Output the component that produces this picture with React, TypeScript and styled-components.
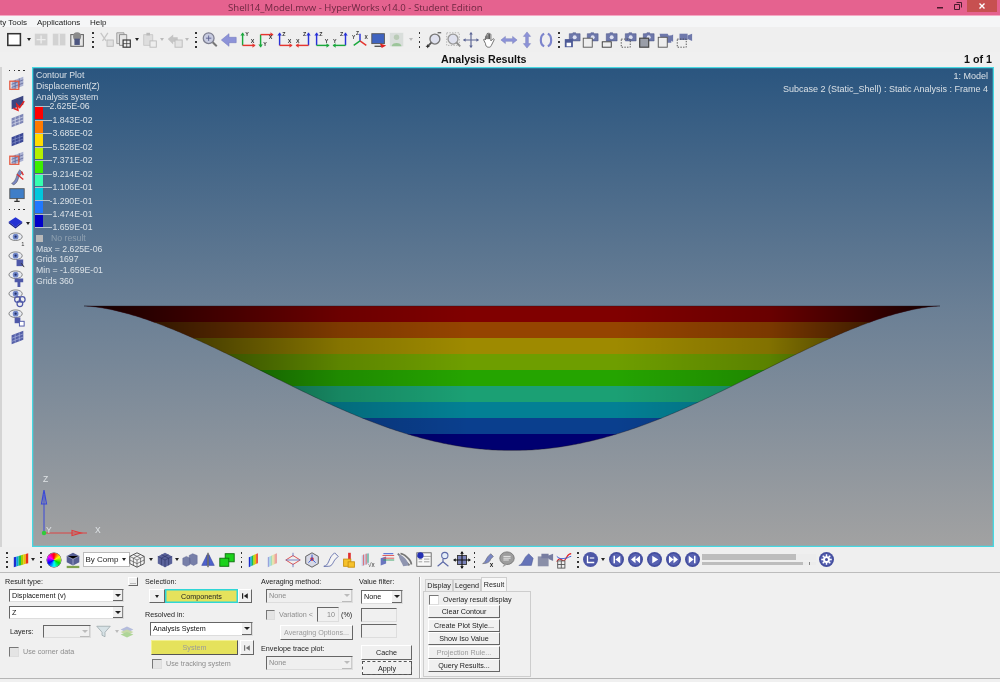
import React from 'react';
import styled, { createGlobalStyle } from 'styled-components';

const GlobalStyle = createGlobalStyle`
  html, body { margin: 0; padding: 0; background: #f0f0f0; }
  * { box-sizing: border-box; }
  #root { width: 1000px; height: 682px; overflow: hidden; }
`;

const Root = styled.div`
  width: 1000px;
  height: 682px;
  display: flex;
  flex-direction: column;
  overflow: hidden;
  background: #f0f0f0;
  color: #222;
  font-family: "Liberation Sans", Arial, sans-serif;
  filter: blur(0.3px);
`;

const TitleBar = styled.div`
  height: 16px;
  flex: none;
  display: flex;
  background: #e5628f;
  border-bottom: 1px solid #f4a9c3;
  padding-left: 228px;
`;

const TitleText = styled.div`
  font-family: "Open Sans", sans-serif;
  font-size: 9.6px;
  line-height: 15px;
  color: #6d2740;
  flex: 1;
`;

const WindowButton = styled.div<{ $close?: boolean }>`
  width: ${p => (p.$close ? '30px' : '18px')};
  height: 12px;
  display: flex;
  align-items: center;
  justify-content: center;
  background: ${p => (p.$close ? '#c75050' : 'transparent')};
  margin-right: ${p => (p.$close ? '3px' : '0')};
`;

const MenuBar = styled.div`
  height: 11px;
  flex: none;
  display: flex;
  background: #f5f6f7;
  font-size: 8px;
  line-height: 13px;
  color: #222;
`;

const MenuItem = styled.span<{ $w: number }>`
  width: ${p => p.$w}px;
  flex: none;
`;

const Toolbar = styled.div`
  height: 25px;
  flex: none;
  display: flex;
  align-items: center;
  padding-left: 6px;
  background: #efefef;
`;

const Cell = styled.div<{ $w?: number; $h?: number }>`
  width: ${p => p.$w ?? 18.7}px;
  height: ${p => p.$h ?? 20}px;
  flex: none;
  display: flex;
  align-items: center;
  justify-content: center;
`;

const Glyph = styled.svg<{ $size?: number }>`
  width: ${p => p.$size ?? 18}px;
  height: ${p => p.$size ?? 18}px;
  flex: none;
  overflow: visible;
`;

const Caret = styled.i<{ $dim?: boolean }>`
  width: 0;
  height: 0;
  display: block;
  border-left: 2.5px solid transparent;
  border-right: 2.5px solid transparent;
  border-top: 3px solid ${p => (p.$dim ? '#bbb' : '#222')};
`;

const Dots = styled.i`
  width: 1.5px;
  height: 16px;
  display: block;
  background: repeating-linear-gradient(#333 0 1.5px, transparent 1.5px 4.7px);
`;

const Heading = styled.div`
  height: 15px;
  flex: none;
  display: flex;
  justify-content: space-between;
  align-items: center;
  padding: 0 8px 1px 441px;
  font-size: 10.7px;
  font-weight: bold;
  color: #111;
`;

const Middle = styled.div`
  height: 480px;
  flex: none;
  display: flex;
  padding-right: 6px;
`;

const SideBar = styled.div`
  width: 32px;
  flex: none;
  display: flex;
  flex-direction: column;
  align-items: center;
  border-left: 2px solid #d4d4d4;
`;

const SideCell = styled.div<{ $h?: number }>`
  height: ${p => p.$h ?? 18.7}px;
  flex: none;
  display: flex;
  align-items: center;
  justify-content: center;
  position: relative;
`;

const SideDots = styled.i`
  width: 16px;
  height: 1.5px;
  display: block;
  background: repeating-linear-gradient(90deg, #333 0 1.5px, transparent 1.5px 4.7px);
`;

const CaretAside = styled.span`
  position: absolute;
  left: 18px;
  top: 50%;
  margin-top: -1px;
`;

const Diamond = styled(Glyph)`
  margin-right: 4px;
`;

const Viewport = styled.div`
  position: relative;
  width: 962px;
  flex: none;
  overflow: hidden;
  background: linear-gradient(#2a557f 0%, #6a7f95 50%, #a2a2a2 100%);
  box-shadow: inset 0 0 0 1.3px #46d8e2;
  color: #d9e0e6;
  font-size: 8.7px;
  line-height: 10.8px;
`;

const Scene = styled.svg`
  position: absolute;
  inset: 0;
  width: 100%;
  height: 100%;
`;

const Legend = styled.div`
  position: absolute;
  left: 4px;
  top: 3px;
`;

const LegendScale = styled.div`
  position: relative;
  height: 121px;
  width: 60px;
  margin-top: 4px;
  margin-bottom: 5.5px;
`;

const Swatch = styled.div<{ $c: string; $y: number }>`
  position: absolute;
  left: -1px;
  width: 8px;
  height: 12.4px;
  top: ${p => p.$y + 0.3}px;
  background: ${p => p.$c};
`;

const Tick = styled.div<{ $y: number }>`
  position: absolute;
  left: -1px;
  top: ${p => p.$y - 5}px;
  height: 11px;
  display: flex;
  align-items: center;
  white-space: nowrap;
  &::before {
    content: '';
    width: 14.5px;
    height: 1px;
    background: #b4c2cc;
    flex: none;
  }
`;

const NoResult = styled.div`
  display: flex;
  align-items: center;
  gap: 8px;
  color: #8ea0b0;
  &::before {
    content: '';
    width: 7px;
    height: 7px;
    background: #b9b9b9;
  }
`;

const ModelLabel = styled.div`
  position: absolute;
  right: 6px;
  top: 3px;
  text-align: right;
  line-height: 13px;
  font-size: 9px;
`;

const AnimBar = styled(Toolbar)`
  padding-left: 0;
`;

const TypeSelect = styled.div`
  width: 47px;
  height: 15px;
  display: flex;
  align-items: center;
  justify-content: space-between;
  background: #fff;
  border: 1px solid #bbb;
  padding: 0 3px 0 2px;
  font-size: 8px;
`;

const Wheel = styled.div`
  width: 14px;
  height: 14px;
  border-radius: 50%;
  background: conic-gradient(#f00, #ff0, #0d0, #0ff, #00f, #f0f, #f00);
  box-shadow: 0 0 0 .5px #333;
`;

const Slider = styled.div`
  width: 114px;
  flex: none;
  display: flex;
  flex-direction: column;
  gap: 2px;
`;

const SliderTrack = styled.div<{ $thin?: boolean }>`
  height: ${p => (p.$thin ? 3 : 6)}px;
  background: #bdbdbd;
  display: flex;
  justify-content: flex-end;
  &::after {
    content: '';
    width: ${p => (p.$thin ? 13 : 20)}px;
    background: linear-gradient(90deg, #ececec 0 48%, #888 48% 52%, #ececec 52%);
  }
`;

const Panel = styled.div`
  height: 110px;
  flex: none;
  display: flex;
  padding: 4px 0 0 5px;
  border-top: 1px solid #bcbcbc;
  position: relative;
  font-size: 7.2px;
  line-height: 9px;
  color: #222;
  &::after {
    content: '';
    position: absolute;
    left: 0;
    right: 0;
    top: 105px;
    border-top: 1px solid #b5b5b5;
  }
`;

const Column = styled.div<{ $w: number; $after?: number }>`
  width: ${p => p.$w}px;
  margin-right: ${p => p.$after ?? 6}px;
  flex: none;
  display: flex;
  flex-direction: column;
`;

const Label = styled.div<{ $top?: number; $w?: number }>`
  height: 9px;
  flex: none;
  width: ${p => (p.$w ? `${p.$w}px` : 'auto')};
  margin-top: ${p => p.$top ?? 0}px;
  white-space: nowrap;
`;

const LabelRow = styled.div`
  display: flex;
  justify-content: space-between;
`;

const Row = styled.div<{ $top?: number; $left?: number; $gap?: number }>`
  display: flex;
  align-items: center;
  margin-top: ${p => p.$top ?? 0}px;
  margin-left: ${p => p.$left ?? 0}px;
  gap: ${p => p.$gap ?? 0}px;
`;

const Combo = styled.div<{ $w: number; $h?: number; $off?: boolean; $top?: number; $left?: number }>`
  width: ${p => p.$w}px;
  height: ${p => p.$h ?? 13}px;
  flex: none;
  margin-top: ${p => p.$top ?? 0}px;
  margin-left: ${p => p.$left ?? 0}px;
  display: flex;
  align-items: stretch;
  padding-left: 2px;
  line-height: ${p => (p.$h ?? 13) - 2}px;
  background: ${p => (p.$off ? '#efefef' : '#fff')};
  color: ${p => (p.$off ? '#8b8b8b' : '#111')};
  border: 1px solid;
  border-color: #666 #ddd #ddd #666;
`;

const ComboArrow = styled.span<{ $off?: boolean }>`
  width: 10px;
  margin-left: auto;
  display: flex;
  align-items: center;
  justify-content: center;
  background: #f0f0f0;
  border-bottom: 1px solid ${p => (p.$off ? '#bbb' : '#666')};
  border-right: 1px solid ${p => (p.$off ? '#ccc' : '#888')};
  & > i {
    border-left-width: 3px;
    border-right-width: 3px;
    border-top-width: 3.5px;
  }
`;

const Check = styled.div<{ $off?: boolean; $w?: number }>`
  display: flex;
  align-items: center;
  gap: 4px;
  height: 9px;
  flex: none;
  width: ${p => (p.$w ? `${p.$w}px` : 'auto')};
  white-space: nowrap;
  color: ${p => (p.$off ? '#8d8d8d' : '#222')};
  &::before {
    content: '';
    width: 8px;
    height: 8px;
    background: ${p => (p.$off ? '#e4e4e4' : '#fff')};
    border: 1px solid;
    border-color: #777 #ddd #ddd #777;
  }
`;

const Raised = styled.button<{ $w: number; $h?: number; $off?: boolean; $top?: number; $left?: number; $focus?: boolean }>`
  width: ${p => p.$w}px;
  height: ${p => p.$h ?? 13}px;
  flex: none;
  margin: ${p => p.$top ?? 0}px 0 0 ${p => p.$left ?? 0}px;
  padding: 0;
  font: inherit;
  white-space: nowrap;
  overflow: hidden;
  background: #f0f0f0;
  color: ${p => (p.$off ? '#9a9a9a' : '#222')};
  border: 1px solid;
  border-color: #fff #666 #666 #fff;
  outline: ${p => (p.$focus ? '1px dashed #555' : 'none')};
  outline-offset: -1px;
  display: flex;
  align-items: center;
  justify-content: center;
`;

const Yellow = styled(Raised)<{ $cyan?: boolean }>`
  background: #e5e25c;
  border-color: ${p => (p.$cyan ? '#2fd6d6' : '#f2f08f #555 #555 #f2f08f')};
  box-shadow: ${p => (p.$cyan ? 'inset 0 0 0 .5px #2fd6d6' : 'none')};
`;

const TextBox = styled.div<{ $w: number; $h?: number; $top?: number }>`
  width: ${p => p.$w}px;
  height: ${p => p.$h ?? 14}px;
  flex: none;
  margin: ${p => p.$top ?? 0}px 0 0 2px;
  padding-right: 3px;
  line-height: 13px;
  text-align: right;
  color: #888;
  border: 1px solid;
  border-color: #666 #ddd #ddd #666;
`;

const Divider = styled.div`
  width: 2px;
  height: 101px;
  flex: none;
  margin: 0 2px 0 0;
  background: linear-gradient(90deg, #aaa 50%, #fff 50%);
`;

const TabRow = styled.div`
  height: 14px;
  padding-left: 2px;
  display: flex;
  align-items: flex-end;
`;

const Tab = styled.div<{ $w: number; $active?: boolean }>`
  width: ${p => p.$w}px;
  height: ${p => (p.$active ? 14 : 12)}px;
  text-align: center;
  line-height: ${p => (p.$active ? 13 : 12)}px;
  background: ${p => (p.$active ? '#f7f7f7' : '#ececec')};
  border: 1px solid #cfcfcf;
  border-bottom: none;
  color: #222;
`;

const TabBody = styled.div`
  height: 86px;
  width: 108px;
  border: 1px solid #cdcdcd;
  padding: 3px 0 0 4px;
  display: flex;
  flex-direction: column;
`;

const Triad = styled.svg`
  position: absolute;
  left: 0;
  bottom: 0;
  width: 80px;
  height: 80px;
`;

// small drawn icons ---------------------------------------------------------

const G = ({ size, children }: { size?: number; children: React.ReactNode }) => (
  <Glyph $size={size} viewBox="0 0 20 20">{children}</Glyph>
);

const Axes = ({ vc, hc, vl, hl, fx, fy }: { vc: string; hc: string; vl: string; hl: string; fx?: boolean; fy?: boolean }) => {
  const x = fx ? 15 : 4;
  const y = fy ? 4 : 16;
  const endY = fy ? 18 : 2;
  const endX = fx ? 1 : 18;
  return (
    <G>
      <path d={`M${x} ${y}V${endY}`} stroke={vc} strokeWidth="1.6" />
      <path d={`M${x - 2.5} ${endY + (fy ? -3 : 3)}L${x} ${endY}L${x + 2.5} ${endY + (fy ? -3 : 3)}Z`} fill={vc} />
      <path d={`M${x} ${y}H${endX}`} stroke={hc} strokeWidth="1.6" />
      <path d={`M${endX + (fx ? 3 : -3)} ${y - 2.5}L${endX} ${y}L${endX + (fx ? 3 : -3)} ${y + 2.5}Z`} fill={hc} />
      <text x={fx ? 9 : 7} y={fy ? 17 : 5} fontSize="6" fontWeight="bold" fill="#333">{vl}</text>
      <text x={fx ? 1 : 13} y={fy ? 9 : 13} fontSize="6" fontWeight="bold" fill="#333">{hl}</text>
    </G>
  );
};

const Camera = ({ mark }: { mark: React.ReactNode }) => (
  <G>
    <path d="M7 3h3l1-1h3l1 1h4v8H7z" fill="#6e78ab" stroke="#4c5588" strokeWidth=".6" />
    <circle cx="13" cy="7" r="2.2" fill="#dfe2f2" />
    {mark}
  </G>
);

const Media = ({ children }: { children: React.ReactNode }) => (
  <Glyph $size={15} viewBox="0 0 20 20">
    <circle cx="10" cy="10" r="10" fill="#454f9f" />
    <circle cx="10" cy="10" r="7.6" fill="#5862b2" />
    <g fill="#fff">{children}</g>
  </Glyph>
);

const Sheet = ({ fill, line, frame }: { fill: string; line: string; frame?: boolean }) => (
  <G>
    <path d="M4 8l13-5v10L4 18z" fill={fill} />
    <path d="M8 6.5v10M12.5 4.8v10M4 11.5l13-5M4 15l13-5" stroke={line} strokeWidth=".7" />
    {frame && <rect x="2" y="8" width="10" height="9" fill="none" stroke="#e4573f" strokeWidth="1.4" />}
  </G>
);

const Eye = ({ children }: { children?: React.ReactNode }) => (
  <G size={19}>
    <ellipse cx="8" cy="6" rx="7" ry="4" fill="#e8ebf2" stroke="#666" strokeWidth=".8" />
    <circle cx="8" cy="6" r="3" fill="#6f86c9" />
    <circle cx="8" cy="6" r="1.2" fill="#243066" />
    {children}
  </G>
);

const Rainbow = ({ stops, w = 16 }: { stops: string[]; w?: number }) => (
  <G>
    {stops.map((c, i) => {
      const bw = w / stops.length;
      const x = 2 + i * bw;
      const t = 7 - (i * 4.5) / stops.length;
      return <path key={c + i} d={`M${x} ${t}l${bw} -${4.5 / stops.length}v11l-${bw} ${4.5 / stops.length}z`} fill={c} />;
    })}
  </G>
);

const RAINBOW = ['#1d2fd0', '#0aa0e0', '#18c050', '#a0d000', '#f0c000', '#e8301a'];
const PALE = ['#9aa3dc', '#9fd4ec', '#a6e0b4', '#e6e2a0', '#eec5a0', '#e88e8e'];

const topGroups: { icon: React.ReactNode; w?: number }[] = [
  { w: 18, icon: <G><rect x="2" y="3" width="14" height="13" fill="#fff" stroke="#333" strokeWidth="1.7" /></G> },
  { w: 9, icon: <Caret /> },
  { w: 18, icon: <G><rect x="2" y="3" width="14" height="13" fill="#d2d2d2" /><path d="M9 5v9M4 9.5h10" stroke="#eee" strokeWidth="1.5" /></G> },
  { w: 18, icon: <G><rect x="2" y="3" width="14" height="13" fill="#d2d2d2" /><path d="M9 3v13" stroke="#eee" strokeWidth="1.5" /></G> },
  { w: 18, icon: <G><rect x="2" y="4" width="14" height="13" fill="#e6e6e6" stroke="#666" strokeWidth="1.2" /><circle cx="9" cy="6" r="4.5" fill="#8b8b8b" /><path d="M6 8.5h6v7H6z" fill="#4d5680" /></G> },
  { w: 12, icon: <Dots /> },
  { w: 16, icon: <G><path d="M3 2l6 9M11 2l-6 9" stroke="#c6c6c6" strokeWidth="1.4" /><rect x="10" y="10" width="7" height="7" fill="#e0e0e0" stroke="#bbb" /></G> },
  { w: 18, icon: <G><path d="M2 2h8v12H2z" fill="#ddd" stroke="#999" /><path d="M5 4h8v12H5z" fill="#e6e6e6" stroke="#888" /><rect x="9" y="10" width="8" height="8" fill="#eee" stroke="#333" strokeWidth="1.3" /><path d="M13 10v8M9 14h8" stroke="#333" strokeWidth=".8" /></G> },
  { w: 8, icon: <Caret /> },
  { w: 17, icon: <G><path d="M3 4h10v12H3z" fill="#dedede" stroke="#c8c8c8" /><rect x="6" y="2" width="4" height="3" fill="#bbb" /><rect x="10" y="11" width="7" height="7" fill="#eee" stroke="#bbb" /></G> },
  { w: 8, icon: <Caret $dim /> },
  { w: 17, icon: <G><path d="M2 9l6-5v3h5v5H8v3z" fill="#c4c4c4" /><rect x="10" y="10" width="8" height="8" fill="#e4e4e4" stroke="#bbb" /></G> },
  { w: 8, icon: <Caret $dim /> },
  { w: 10, icon: <Dots /> },
  { icon: <G><circle cx="8.5" cy="8" r="6" fill="#c7cbe0" stroke="#7d7f90" strokeWidth="1.4" /><path d="M8.5 5v6M5.5 8h6" stroke="#5a6090" /><path d="M13 12.5l4.5 4.5" stroke="#777" strokeWidth="2.2" /></G> },
  { icon: <G><path d="M1.5 10L10 3v4h8v6h-8v4z" fill="#8d93d8" stroke="#7177bd" strokeWidth=".6" /></G> },
  { icon: <Axes vc="#1aa83c" hc="#e5352f" vl="Y" hl="X" /> },
  { icon: <Axes vc="#1aa83c" hc="#e5352f" vl="Y" hl="X" fy /> },
  { icon: <Axes vc="#2731d8" hc="#e5352f" vl="Z" hl="X" /> },
  { icon: <Axes vc="#2731d8" hc="#e5352f" vl="Z" hl="X" fx /> },
  { icon: <Axes vc="#2731d8" hc="#1aa83c" vl="Z" hl="Y" /> },
  { icon: <Axes vc="#2731d8" hc="#1aa83c" vl="Z" hl="Y" fx /> },
  { icon: <G><path d="M10 11V3" stroke="#2731d8" strokeWidth="1.6" /><path d="M10 11l7 5" stroke="#e5352f" strokeWidth="1.6" /><path d="M10 11l-7 5" stroke="#1aa83c" strokeWidth="1.6" /><text x="1" y="9" fontSize="5.5" fill="#333" fontWeight="bold">Y</text><text x="15" y="9" fontSize="5.5" fill="#333" fontWeight="bold">X</text><text x="5.5" y="4" fontSize="5.5" fill="#333" fontWeight="bold">Z</text></G> },
  { icon: <G><rect x="2" y="3" width="14" height="11" fill="#3f63c0" stroke="#555" /><path d="M5 17h8" stroke="#555" strokeWidth="1.5" /><path d="M11 14l7 2-5 3z" fill="#e02222" /></G> },
  { icon: <G><rect x="2" y="2" width="15" height="15" fill="#d9dedb" /><circle cx="9.5" cy="7" r="3" fill="#b9cbb6" /><path d="M4 17c0-5 11-5 11 0z" fill="#9cc59a" /></G> },
  { w: 8, icon: <Caret $dim /> },
  { w: 10, icon: <Dots /> },
  { icon: <G><circle cx="11" cy="9" r="5.5" fill="#dfe1ee" stroke="#777" strokeWidth="1.5" /><path d="M7 13l-4 4" stroke="#555" strokeWidth="2" /><path d="M14 2h4M1 17h4M3 15v4" stroke="#222" /></G> },
  { icon: <G><circle cx="10" cy="9" r="5.5" fill="#dfe1ee" stroke="#999" strokeWidth="1.5" /><path d="M14 13l4 4" stroke="#888" strokeWidth="2" /><rect x="3" y="2" width="14" height="14" fill="none" stroke="#aaa" strokeDasharray="1.5 1.5" /></G> },
  { icon: <G><path d="M10 2v16M2 10h16" stroke="#5d6695" strokeWidth="1.3" /><path d="M10 1l2 3H8zM10 19l2-3H8zM1 10l3-2v4zM19 10l-3-2v4z" fill="#5d6695" /></G> },
  { icon: <G><path d="M5 10V6c0-1 1.5-1 1.5 0v3V3.500c0-1 1.5-1 1.5 0V9V3c0-1 1.5-1 1.5 0v6V4c0-1 1.500-1 1.500 0v7l2-2c1-1 2 0 1.500 1l-3 6c-.5 1-1 2-2 2H8c-2 0-3-2-3-4l-2-4c-.5-1 1-1.500 2 0z" fill="#fff" stroke="#555" strokeWidth=".9" /></G> },
  { icon: <G><path d="M1 10l5-4v2.500h8V6l5 4-5 4v-2.500H6V14z" fill="#8d93d8" stroke="#6f76b8" strokeWidth=".5" /></G> },
  { icon: <G><path d="M10 1l4 5h-2.500v8H14l-4 5-4-5h2.500V6H6z" fill="#8d93d8" stroke="#6f76b8" strokeWidth=".5" /></G> },
  { icon: <G><path d="M8 3C3 5 3 15 8 17M12 3c5 2 5 12 0 14" fill="none" stroke="#7c84cc" strokeWidth="2.4" /></G> },
  { w: 7, icon: <Dots /> },
  { icon: <Camera mark={<><rect x="2" y="9" width="9" height="9" fill="#4d5a97" /><rect x="4" y="13" width="5" height="4" fill="#fff" /></>} /> },
  { icon: <Camera mark={<rect x="2.5" y="8" width="10" height="10" fill="#eee" stroke="#555" />} /> },
  { icon: <Camera mark={<rect x="2.5" y="12" width="10" height="6" fill="#eee" stroke="#333" />} /> },
  { icon: <Camera mark={<rect x="2.5" y="9" width="10" height="9" fill="none" stroke="#444" strokeDasharray="1.5 1.5" />} /> },
  { icon: <Camera mark={<rect x="3" y="8" width="10" height="10" fill="#9a9ea8" stroke="#444" strokeWidth="1.3" />} /> },
  { icon: <G><path d="M4 3h9l1 2h3v8H6z" fill="#6e78ab" /><path d="M13 7l6-3v8l-6-3z" fill="#6e78ab" /><rect x="2.5" y="7" width="10" height="11" fill="#eee" stroke="#555" /></G> },
  { icon: <G><path d="M5 3h9v7H5z" fill="#6e78ab" /><path d="M14 5l5-2v8l-5-2z" fill="#6e78ab" /><rect x="2.5" y="9" width="10" height="9" fill="none" stroke="#444" strokeDasharray="1.5 1.5" /></G> },
];

const sideTop: React.ReactNode[] = [
  <Sheet fill="#aab1d2" line="#4f5890" frame />,
  <G><path d="M4 8l13-5v10L4 18z" fill="#3b4582" /><path d="M18 9l-5 7-3-3 1 6-5-2" fill="none" stroke="#e02222" strokeWidth="1.8" /></G>,
  <Sheet fill="#7d85b5" line="#dfe2f0" />,
  <Sheet fill="#3a4795" line="#8d97cf" />,
  <Sheet fill="#aab1d2" line="#4f5890" frame />,
  <G><path d="M4 18c3-1 5-5 6-10l3-5 3 3-4 5c-1 4-2 7-6 9z" fill="#7a87c4" stroke="#444" strokeWidth=".5" /><path d="M10 8l7 6M15 5l2 4" stroke="#e03030" strokeWidth="1.5" /></G>,
  <G><rect x="2" y="3" width="16" height="11" fill="#3f7ec8" stroke="#555" /><path d="M7 17h6M10 14v3" stroke="#333" strokeWidth="1.5" /></G>,
];

const sideEyes: React.ReactNode[] = [
  <Eye><text x="14" y="16" fontSize="6" fill="#333">1</text></Eye>,
  <Eye><rect x="9" y="10" width="7" height="7" fill="#4e58a8" /><path d="M14 14l3 4" stroke="#333" /></Eye>,
  <Eye><path d="M7 10h9v4h-3v5h-3v-5H7z" fill="#4e58a8" /></Eye>,
  <Eye><circle cx="10" cy="12" r="3" fill="none" stroke="#4e58a8" strokeWidth="1.3" /><circle cx="15" cy="12" r="3" fill="none" stroke="#4e58a8" strokeWidth="1.3" /><circle cx="12.5" cy="16.5" r="3" fill="none" stroke="#4e58a8" strokeWidth="1.3" /></Eye>,
  <Eye><rect x="7" y="10" width="6" height="6" fill="#4e58a8" /><rect x="12" y="14" width="5" height="5" fill="#fff" stroke="#4e58a8" /></Eye>,
  <Sheet fill="#5560a8" line="#aeb6e0" />,
];

const animGroups: { icon: React.ReactNode; w?: number }[] = [
  { w: 14, icon: <Dots /> },
  { w: 13, icon: <Rainbow stops={RAINBOW} /> },
  { w: 11, icon: <Caret /> },
  { w: 6, icon: <Dots /> },
  { w: 20, icon: <Wheel /> },
  { w: 18, icon: <G><path d="M10 2l7 3.5v7L10 16l-7-3.5v-7z" fill="#565f93" /><path d="M3 5.5l7 3.500 7-3.500M10 9v7" stroke="#c3c7e2" strokeWidth=".7" /><rect x="3" y="16.5" width="14" height="2.5" fill="#7fa24e" /></G> },
  { w: 48, icon: <TypeSelect>By Comp<Caret /></TypeSelect> },
  { w: 14, icon: <G><path d="M10 2l8 4v8l-8 4-8-4V6z" fill="#f4f4f4" stroke="#444" /><path d="M2 6l8 4 8-4M10 10v8M6 4l8 4v8M14 4L6 8v8M2 10l8 4 8-4" fill="none" stroke="#444" strokeWidth=".7" /></G> },
  { w: 14, icon: <Caret /> },
  { w: 14, icon: <G><path d="M10 2l8 4v8l-8 4-8-4V6z" fill="#5a629a" /><path d="M2 6l8 4 8-4M10 10v8M6 4l8 4v8M14 4L6 8v8" fill="none" stroke="#2d3468" strokeWidth=".7" /></G> },
  { w: 10, icon: <Caret /> },
  { w: 16, icon: <G><path d="M2 8l4-2 4 2v7l-4 2-4-2zM9 5l4-2 5 2v9l-4 2-4-2z" fill="#777fa8" stroke="#5a6190" strokeWidth=".5" /></G> },
  { w: 20, icon: <G><path d="M9 4v12H3zM11 4v12h6z" fill="#4e62cc" stroke="#28348e" strokeWidth=".5" /><path d="M10 2v16" stroke="#111" /></G> },
  { w: 18, icon: <G><rect x="8" y="3" width="10" height="9" fill="#1cd21c" stroke="#0d6f0d" /><rect x="2" y="8" width="10" height="9" fill="#1cd21c" stroke="#0d6f0d" /></G> },
  { w: 10.6, icon: <Dots /> },
  { icon: <Rainbow stops={RAINBOW} w={10} /> },
  { icon: <Rainbow stops={PALE} w={10} /> },
  { icon: <G><path d="M10 5l8 5-8 5-8-5z" fill="none" stroke="#d44" /><path d="M2 10h16M10 2v4M10 14v4" stroke="#6a76c0" /></G> },
  { icon: <G><path d="M10 2l7 4v8l-7 4-7-4V6z" fill="#d7d9e6" stroke="#555" /><circle cx="10" cy="9" r="2" fill="#e03030" /><path d="M10 9V4M10 9l4 4M10 9l-4 4" stroke="#2b50d0" /></G> },
  { icon: <G><path d="M2 17c5 0 6-9 9-12l3-3 4 4-3 3c-3 3-3 8-8 8z" fill="#f4f4f4" stroke="#5d6aa8" /></G> },
  { icon: <G><path d="M9 2h3v7H9z" fill="#e03030" /><rect x="4" y="9" width="8" height="8" fill="#f6c22c" stroke="#c99110" /><rect x="9" y="12" width="7" height="6" fill="#f6c22c" stroke="#c99110" /></G> },
  { icon: <G><path d="M3 5l8-3v12l-8 3z" fill="#c6cbe4" /><path d="M5 4v12M8 3v12" stroke="#e06a6a" /><path d="M10 3v10" stroke="#3ab27a" /><text x="10" y="18" fontSize="7" fill="#333">√x</text></G> },
  { icon: <G><path d="M3 16V8l6-2v8z" fill="#6a76c0" /><path d="M5 5h13M6 8h12" stroke="#e05050" /><path d="M6 10h12" stroke="#2fa060" /><path d="M6 3h11" stroke="#3050d0" /></G> },
  { icon: <G><path d="M2 3l13 13M5 3c3 0 12 6 12 12" fill="none" stroke="#777" strokeWidth="2" /><path d="M3 4c5 1 10 6 11 12l-6 1C6 12 3 9 3 4z" fill="#8f95b0" /></G> },
  { icon: <G><rect x="2" y="2" width="16" height="15" fill="#f8f8f8" stroke="#666" /><path d="M2 6h16M10 9h6M10 12h6M4 9h4M4 12h4" stroke="#999" /><circle cx="6" cy="5" r="3.5" fill="#2430b4" /></G> },
  { icon: <G><circle cx="12" cy="5" r="3.5" fill="#e3ecf8" stroke="#5d6aa8" strokeWidth="1.2" /><path d="M10 12V9M10 12l-6 5M10 12l6 5" stroke="#5d6aa8" strokeWidth="1.3" fill="none" /></G> },
  { icon: <G><rect x="5" y="5" width="10" height="10" fill="#7a82ba" stroke="#333" /><path d="M2 10h16M10 1v18" stroke="#111" strokeWidth="1.2" /><path d="M10 0l2 3H8zM10 20l2-3H8zM0 10l3-2v4zM20 10l-3-2v4z" fill="#111" /></G> },
  { w: 7.5, icon: <Dots /> },
  { w: 19, icon: <G><path d="M4 14c3-1 4-6 6-8l3-3 3 3-3 3c-1 3-3 5-9 5z" fill="#7a87c4" stroke="#444" strokeWidth=".5" /><text x="12" y="18" fontSize="7" fontWeight="bold" fill="#222">x</text></G> },
  { w: 19, icon: <G><ellipse cx="10" cy="8" rx="8" ry="7" fill="#9d9d9d" stroke="#777" /><path d="M6 6h8M6 8h8M6 10h6" stroke="#eee" /><path d="M7 14l-2 4 5-3z" fill="#9d9d9d" /></G> },
  { w: 19, icon: <G><path d="M2 16c4-1 6-8 8-10l3-3 5 5-2 8z" fill="#6674b8" stroke="#44508e" strokeWidth=".5" /></G> },
  { w: 19, icon: <G><rect x="2" y="6" width="12" height="11" fill="#8a8fa8" /><path d="M6 3h8v5H6zM14 5l5-2v8l-5-2z" fill="#777da0" /></G> },
  { w: 19, icon: <G><path d="M2 12c4-8 6 2 9-2s3-7 7-7" fill="none" stroke="#e02222" strokeWidth="1.3" /><path d="M2 6c4 4 8 2 10 2s4-2 6-2" fill="none" stroke="#3050d0" /><rect x="3" y="11" width="8" height="8" fill="#eee" stroke="#555" /><path d="M7 11v8M3 15h8" stroke="#555" /></G> },
  { w: 9, icon: <Dots /> },
  { w: 17, icon: <Glyph $size={15} viewBox="0 0 20 20"><circle cx="10" cy="10" r="10" fill="#4d57a6" /><path d="M6 5v9h9" fill="none" stroke="#fff" strokeWidth="1.8" /><path d="M9 8h6" stroke="#fff" strokeWidth="1.5" /></Glyph> },
  { w: 8, icon: <Caret /> },
  { w: 19, icon: <Media><path d="M6 5h2v10H6zM15 5v10L8.5 10z" /></Media> },
  { w: 19, icon: <Media><path d="M10 5v10L4 10zM16 5v10l-6-5z" /></Media> },
  { w: 19, icon: <Media><path d="M7 5v10l8-5z" /></Media> },
  { w: 19, icon: <Media><path d="M4 5v10l6-5zM10 5v10l6-5z" /></Media> },
  { w: 19, icon: <Media><path d="M12 5h2v10h-2zM5 5v10l6.5-5z" /></Media> },
];

// the deformed shell: a flattened cosine dip between the two tips, x 84 to 940
const shellPath = (() => {
  let d = 'M84 306';
  for (let x = 86; x <= 940; x += 2) {
    const dip = (1 - Math.cos(((x - 84) / 428) * Math.PI)) / 2;
    d += `L${x} ${(306 + 144.5 * Math.pow(dip, 0.8)).toFixed(2)}`;
  }
  return `${d}Z`;
})();

const BANDS = ['#800000', '#954400', '#9e8a00', '#6e9e00', '#25a400', '#1ba074', '#038094', '#0a3f8e', '#000070'];
const SWATCHES = ['#ff0000', '#ff7a00', '#ffdc00', '#b4f000', '#3bee00', '#35ffb0', '#00c8dc', '#1f78ff', '#0000c8'];
const TICKS = ['2.625E-06', '-1.843E-02', '-3.685E-02', '-5.528E-02', '-7.371E-02', '-9.214E-02', '-1.106E-01', '-1.290E-01', '-1.474E-01', '-1.659E-01'];

const SkipBack = ({ color }: { color: string }) => (
  <G size={8}><path d="M4 3v14" stroke={color} strokeWidth="3" /><path d="M17 3v14L7 10z" fill={color} /></G>
);

const App = () => (
  <Root>
    <GlobalStyle />
    <TitleBar>
      <TitleText>Shell14_Model.mvw - HyperWorks v14.0 - Student Edition</TitleText>
      <WindowButton>
        <Glyph $size={8} viewBox="0 0 8 8"><rect x="1" y="5" width="6" height="1.5" fill="#4a1a2c" /></Glyph>
      </WindowButton>
      <WindowButton>
        <Glyph $size={8} viewBox="0 0 8 8"><path d="M2.5 .5h5v5M.5 2.5h5v5h-5z" fill="none" stroke="#4a1a2c" /></Glyph>
      </WindowButton>
      <WindowButton $close>
        <Glyph $size={8} viewBox="0 0 8 8"><path d="M1.5 1.5l5 5M6.5 1.5l-5 5" stroke="#fff" strokeWidth="1.4" /></Glyph>
      </WindowButton>
    </TitleBar>

    <MenuBar>
      <MenuItem $w={37}>ty Tools</MenuItem>
      <MenuItem $w={53}>Applications</MenuItem>
      <MenuItem $w={30}>Help</MenuItem>
    </MenuBar>

    <Toolbar>
      {topGroups.map((t, i) => <Cell key={i} $w={t.w}>{t.icon}</Cell>)}
    </Toolbar>

    <Heading>
      <span>Analysis Results</span>
      <span>1 of 1</span>
    </Heading>

    <Middle>
      <SideBar>
        <SideCell $h={6.6}><SideDots /></SideCell>
        {sideTop.map((d, i) => <SideCell key={i}>{d}</SideCell>)}
        <SideCell $h={10}><SideDots /></SideCell>
        <SideCell $h={17}>
          <Diamond $size={15} viewBox="0 0 20 20"><path d="M10 3l9 6-9 7-9-7z" fill="#2432d4" /><path d="M1 9l9 7 9-7v2l-9 7-9-7z" fill="#141e8a" /></Diamond>
          <CaretAside><Caret /></CaretAside>
        </SideCell>
        <SideCell $h={18}>{sideEyes[0]}</SideCell>
        {sideEyes.slice(1).map((d, i) => <SideCell key={i} $h={19.4}>{d}</SideCell>)}
      </SideBar>

      <Viewport>
        <Scene viewBox="32 67 962 480">
          <defs>
            <clipPath id="shell"><path d={shellPath} /></clipPath>
            <linearGradient id="shade" gradientUnits="userSpaceOnUse" x1="84" y1="0" x2="940" y2="0">
              <stop offset="0" stopColor="#000" stopOpacity=".85" />
              <stop offset=".13" stopColor="#000" stopOpacity=".55" />
              <stop offset=".3" stopColor="#000" stopOpacity=".16" />
              <stop offset=".45" stopColor="#000" stopOpacity="0" />
              <stop offset=".62" stopColor="#000" stopOpacity="0" />
              <stop offset=".8" stopColor="#000" stopOpacity=".18" />
              <stop offset="1" stopColor="#000" stopOpacity=".85" />
            </linearGradient>
          </defs>
          <g clipPath="url(#shell)">
            {BANDS.map((c, i) => <rect key={c} x="80" y={306 + i * 16} width="864" height="16.5" fill={c} />)}
            <rect x="80" y="300" width="864" height="160" fill="url(#shade)" />
          </g>
          <path d={shellPath} fill="none" stroke="#1a1020" strokeWidth=".6" strokeOpacity=".6" />
        </Scene>

        <Legend>
          <div>Contour Plot</div>
          <div>Displacement(Z)</div>
          <div>Analysis system</div>
          <LegendScale>
            {SWATCHES.map((c, i) => <Swatch key={c} $c={c} $y={i * 13.44} />)}
            {TICKS.map((t, i) => <Tick key={t} $y={i * 13.44}>{t}</Tick>)}
          </LegendScale>
          <NoResult>No result</NoResult>
          <div>Max = 2.625E-06</div>
          <div>Grids 1697</div>
          <div>Min = -1.659E-01</div>
          <div>Grids 360</div>
        </Legend>

        <ModelLabel>
          <div>1: Model</div>
          <div>Subcase 2 (Static_Shell) : Static Analysis : Frame 4</div>
        </ModelLabel>

        <Triad viewBox="0 0 80 80">
          <path d="M12 66V28" stroke="#3a49d8" strokeWidth="1" />
          <path d="M12 23l-2.5 14h5z" fill="none" stroke="#3a49d8" strokeWidth="1.2" />
          <path d="M12 66h43" stroke="#e23a3a" strokeWidth=".9" />
          <path d="M40 63.5v5l9-2.5z" fill="none" stroke="#e23a3a" strokeWidth="1.1" />
          <circle cx="12" cy="66" r="2.2" fill="#2fcc3a" />
          <text x="11" y="15" fontSize="8.5" fill="#dfe3e6">Z</text>
          <text x="14" y="66" fontSize="8.5" fill="#dfe3e6">Y</text>
          <text x="63" y="66" fontSize="8.5" fill="#dfe3e6">X</text>
        </Triad>
      </Viewport>
    </Middle>

    <AnimBar>
      {animGroups.map((t, i) => <Cell key={i} $w={t.w}>{t.icon}</Cell>)}
      <Slider>
        <SliderTrack />
        <SliderTrack $thin />
      </Slider>
      <Cell $w={20}>
        <Media><circle cx="10" cy="10" r="4.5" /><path d="M10 3v14M3 10h14M5 5l10 10M15 5L5 15" stroke="#fff" strokeWidth="1.8" /><circle cx="10" cy="10" r="2" fill="#454f9f" /></Media>
      </Cell>
    </AnimBar>

    <Panel>
      <Column $w={133} $after={7}>
        <LabelRow>
          <Label>Result type:</Label>
          <Raised $w={10} $h={9}>...</Raised>
        </LabelRow>
        <Combo $w={115} $left={4} $top={3}>Displacement (v)<ComboArrow><Caret /></ComboArrow></Combo>
        <Combo $w={115} $left={4} $top={4}>Z<ComboArrow><Caret /></ComboArrow></Combo>
        <Row $top={6} $left={5}>
          <Label as="span" $w={33}>Layers:</Label>
          <Combo $w={48} $off><ComboArrow $off><Caret $dim /></ComboArrow></Combo>
          <Cell $w={24} $h={13}>
            <G size={15}><path d="M1 3h18l-7 8v6l-4-2v-4z" fill="#d7e2e6" stroke="#9aa5aa" /></G>
          </Cell>
          <Caret $dim />
          <Cell $w={16} $h={13}>
            <G size={16}><path d="M10 3l8 4-8 4-8-4z" fill="#b4bcdc" /><path d="M2 10l8 4 8-4-8-3z" fill="#c5d8a6" /><path d="M2 13l8 4 8-4-8-3z" fill="#aed598" /></G>
          </Cell>
        </Row>
        <Row $top={9} $left={4}><Check $off>Use corner data</Check></Row>
      </Column>

      <Column $w={110}>
        <Label>Selection:</Label>
        <Row $top={3} $left={4}>
          <Raised $w={16} $h={14}><Caret /></Raised>
          <Yellow $w={73} $h={14} $cyan>Components</Yellow>
          <Raised $w={14} $h={14}><SkipBack color="#222" /></Raised>
        </Row>
        <Label $top={7}>Resolved in:</Label>
        <Combo $w={103} $h={14} $left={5} $top={3}>Analysis System<ComboArrow><Caret /></ComboArrow></Combo>
        <Row $top={4} $left={6} $gap={2}>
          <Yellow $w={87} $h={15} $off>System</Yellow>
          <Raised $w={14} $h={15} $off><SkipBack color="#777" /></Raised>
        </Row>
        <Row $top={4} $left={7}><Check $off>Use tracking system</Check></Row>
      </Column>

      <Column $w={92}>
        <Label>Averaging method:</Label>
        <Combo $w={87} $h={14} $left={5} $top={3} $off>None<ComboArrow $off><Caret $dim /></ComboArrow></Combo>
        <Row $top={4} $left={5} $gap={2}>
          <Check $off $w={47}>Variation &lt;</Check>
          <TextBox $w={22} $h={15}>10</TextBox>
          <Label as="span">(%)</Label>
        </Row>
        <Raised $w={73} $h={15} $left={19} $top={3} $off>Averaging Options...</Raised>
        <Label $top={4}>Envelope trace plot:</Label>
        <Combo $w={87} $h={14} $left={5} $top={3} $off>None<ComboArrow $off><Caret $dim /></ComboArrow></Combo>
      </Column>

      <Column $w={54}>
        <Label>Value filter:</Label>
        <Combo $w={42} $h={14} $left={2} $top={4}>None<ComboArrow><Caret /></ComboArrow></Combo>
        <TextBox $w={36} $top={4} />
        <TextBox $w={36} $top={2} />
        <Raised $w={51} $h={15} $left={2} $top={7}>Cache</Raised>
        <Raised $w={50} $h={14} $left={3} $top={1} $focus>Apply</Raised>
      </Column>

      <Divider />

      <Column $w={108}>
        <TabRow>
          <Tab $w={28}>Display</Tab>
          <Tab $w={28}>Legend</Tab>
          <Tab $w={26} $active>Result</Tab>
        </TabRow>
        <TabBody>
          <Row $left={1}><Check>Overlay result display</Check></Row>
          <Raised $w={72} $top={1}>Clear Contour</Raised>
          <Raised $w={72} $top={.5}>Create Plot Style...</Raised>
          <Raised $w={72} $top={.5}>Show Iso Value</Raised>
          <Raised $w={72} $top={.5} $off>Projection Rule...</Raised>
          <Raised $w={72} $top={.5}>Query Results...</Raised>
        </TabBody>
      </Column>
    </Panel>
  </Root>
);

export default App;
